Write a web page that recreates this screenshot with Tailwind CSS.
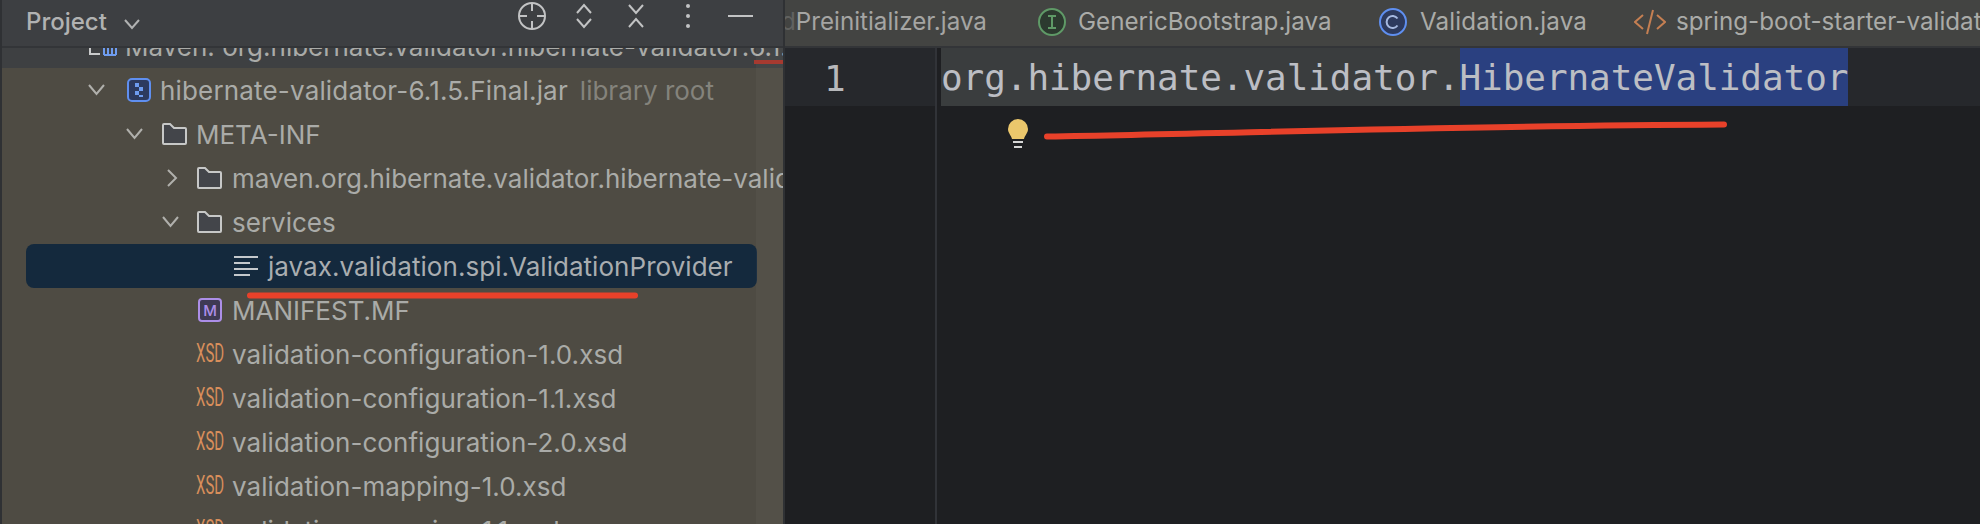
<!DOCTYPE html>
<html lang="en">
<head>
<meta charset="UTF-8">
<title>Project</title>
<script src="https://cdn.jsdelivr.net/npm/@tailwindcss/browser@4"></script>
</head>
<body class="overflow-hidden bg-[#1e1f22]">
<div class="relative flex h-[524px] w-[1980px] overflow-hidden font-['Inter',sans-serif] text-[26px] text-[#aaaba8]">

	<!-- project tool window -->
	<aside class="flex h-full w-[785px] shrink-0 flex-col border-x-2 border-[#2f3134] bg-[#4e4b43]">
		<header class="relative z-10 flex h-[48px] shrink-0 items-center border-b-2 border-[#333538] bg-[#3d3f42] pb-[2px] pl-[24px] text-[24px] text-[#b1b2b2]">
			<span class="font-medium">Project</span>
			<svg class="ml-[16px] mt-[3px]" width="18" height="12" viewBox="0 0 18 12" fill="none" stroke="#b1b2b2" stroke-width="2"><path d="M2 2l7 8 7-8"/></svg>
			<svg class="absolute left-[514px] top-[1px]" width="32" height="32" viewBox="0 0 32 32" fill="none" stroke="#c2c3c4" stroke-width="2"><circle cx="16" cy="15" r="13"/><path d="M16 2v8M16 20v8M3 15h8M21 15h8"/></svg>
			<svg class="absolute left-[572px] top-[3px]" width="20" height="26" viewBox="0 0 20 26" fill="none" stroke="#c2c3c4" stroke-width="2"><path d="M3 10l7-8 7 8M3 16l7 8 7-8"/></svg>
			<svg class="absolute left-[624px] top-[3px]" width="20" height="26" viewBox="0 0 20 26" fill="none" stroke="#c2c3c4" stroke-width="2"><path d="M3 2l7 8 7-8M3 24l7-8 7 8"/></svg>
			<svg class="absolute left-[682px] top-[3px]" width="8" height="26" viewBox="0 0 8 26" fill="#c2c3c4"><circle cx="4" cy="3" r="2"/><circle cx="4" cy="13" r="2"/><circle cx="4" cy="23" r="2"/></svg>
			<div class="absolute left-[726px] top-[15px] h-[2px] w-[25px] bg-[#c2c3c4]"></div>
		</header>

		<div class="relative flex-1 overflow-hidden">
			<div class="-mt-[24px] whitespace-nowrap">
				<div class="flex h-[44px] items-center bg-[#3e4042] pl-[86px]">
					<svg class="shrink-0" width="32" height="24" viewBox="0 0 32 24" fill="none"><path d="M2 2v18h10" stroke="#c9cacb" stroke-width="2"/><path d="M16 21V10h4v11M20 21V6h4v15M24 21V10h4v11M16 21h12" stroke="#6e9cf0" stroke-width="2"/></svg>
					<span class="ml-[5px]">Maven: org.hibernate.validator:hibernate-validator:6.1.5.Final</span>
				</div>

				<div class="flex h-[44px] items-center pl-[86px]">
					<svg class="w-[17px] shrink-0" height="12" viewBox="0 0 17 12" fill="none" stroke="#b0b0ac" stroke-width="2"><path d="M1 1l7.5 9L16 1"/></svg>
					<svg class="ml-[22px] shrink-0" width="24" height="24" viewBox="0 0 24 24"><rect x="1" y="1" width="22" height="22" rx="4" fill="#2d3a5e" stroke="#5f8ff0" stroke-width="2"/><path d="M8 5h4v4H8zM12 9h4v4h-4zM8 13h4v4H8zM12 17h4v2h-4z" fill="#6e9cf0"/></svg>
					<span class="ml-[9px] tracking-[0.17px]">hibernate-validator-6.1.5.Final.jar</span>
					<span class="ml-[12px] text-[#84837c]">library root</span>
				</div>

				<div class="flex h-[44px] items-center pl-[124px]">
					<svg class="w-[17px] shrink-0" height="12" viewBox="0 0 17 12" fill="none" stroke="#b0b0ac" stroke-width="2"><path d="M1 1l7.5 9L16 1"/></svg>
					<svg class="ml-[18px] shrink-0" width="27" height="24" viewBox="0 0 27 24"><path d="M2 21V3q0-1 1-1h6l4 4h11q1 0 1 1v14q0 1-1 1H3q-1 0-1-1z" fill="#43454a" stroke="#c7c8c7" stroke-width="2"/></svg>
					<span class="ml-[8px]">META-INF</span>
				</div>

				<div class="flex h-[44px] items-center pl-[162px]">
					<svg class="w-[17px] shrink-0" height="20" viewBox="0 0 17 20" fill="none" stroke="#b0b0ac" stroke-width="2"><path d="M4 2l8 8-8 8"/></svg>
					<svg class="ml-[15px] shrink-0" width="27" height="24" viewBox="0 0 27 24"><path d="M2 21V3q0-1 1-1h6l4 4h11q1 0 1 1v14q0 1-1 1H3q-1 0-1-1z" fill="#43454a" stroke="#c7c8c7" stroke-width="2"/></svg>
					<span class="ml-[9px]">maven.org.hibernate.validator.hibernate-validator-6.1.5.Final</span>
				</div>

				<div class="flex h-[44px] items-center pl-[160px]">
					<svg class="w-[17px] shrink-0" height="12" viewBox="0 0 17 12" fill="none" stroke="#b0b0ac" stroke-width="2"><path d="M1 1l7.5 9L16 1"/></svg>
					<svg class="ml-[17px] shrink-0" width="27" height="24" viewBox="0 0 27 24"><path d="M2 21V3q0-1 1-1h6l4 4h11q1 0 1 1v14q0 1-1 1H3q-1 0-1-1z" fill="#43454a" stroke="#c7c8c7" stroke-width="2"/></svg>
					<span class="ml-[9px]">services</span>
				</div>

				<div class="ml-[24px] flex h-[44px] w-[731px] items-center rounded-[8px] bg-[#14293d] pl-[208px]">
					<svg class="shrink-0" width="24" height="20" viewBox="0 0 24 20" fill="none" stroke="#c4c8cc" stroke-width="2"><path d="M0 1h24M0 7h16M0 13h24M0 19h16"/></svg>
					<span class="ml-[10px] tracking-[0.04px] text-[#a9adb0]">javax.validation.spi.ValidationProvider</span>
				</div>

				<div class="flex h-[44px] items-center pl-[196px]">
					<svg class="shrink-0" width="24" height="24" viewBox="0 0 24 24"><rect x="1" y="1" width="22" height="22" rx="3" fill="#3f3a54" stroke="#ac8ee8" stroke-width="2"/><text x="12" y="18" text-anchor="middle" font-family="Inter" font-size="15" font-weight="500" fill="#ac8ee8">M</text></svg>
					<span class="ml-[10px]">MANIFEST.MF</span>
				</div>

				<div class="flex h-[44px] items-center pl-[194px]">
					<span class="w-[28px] shrink-0 origin-left scale-x-[0.6] font-['Roboto',sans-serif] text-[25px] text-[#d88e5b]">XSD</span>
					<span class="ml-[8px] tracking-[0.05px]">validation-configuration-1.0.xsd</span>
				</div>
				<div class="flex h-[44px] items-center pl-[194px]">
					<span class="w-[28px] shrink-0 origin-left scale-x-[0.6] font-['Roboto',sans-serif] text-[25px] text-[#d88e5b]">XSD</span>
					<span class="ml-[8px] tracking-[0.05px]">validation-configuration-1.1.xsd</span>
				</div>
				<div class="flex h-[44px] items-center pl-[194px]">
					<span class="w-[28px] shrink-0 origin-left scale-x-[0.6] font-['Roboto',sans-serif] text-[25px] text-[#d88e5b]">XSD</span>
					<span class="ml-[8px] tracking-[0.05px]">validation-configuration-2.0.xsd</span>
				</div>
				<div class="flex h-[44px] items-center pl-[194px]">
					<span class="w-[28px] shrink-0 origin-left scale-x-[0.6] font-['Roboto',sans-serif] text-[25px] text-[#d88e5b]">XSD</span>
					<span class="ml-[8px] tracking-[0.05px]">validation-mapping-1.0.xsd</span>
				</div>
				<div class="flex h-[44px] items-center pl-[194px]">
					<span class="w-[28px] shrink-0 origin-left scale-x-[0.6] font-['Roboto',sans-serif] text-[25px] text-[#d88e5b]">XSD</span>
					<span class="ml-[8px] tracking-[0.05px]">validation-mapping-1.1.xsd</span>
				</div>
			</div>
			<!-- scrollbar track over the tree -->
			<div class="absolute inset-y-0 right-0 w-[27px] bg-white/3"></div>
		</div>
	</aside>

	<!-- editor -->
	<main class="flex min-w-0 flex-1 flex-col">
		<nav class="flex h-[48px] shrink-0 items-center overflow-hidden whitespace-nowrap border-b-2 border-[#333538] bg-[#434442] pb-[2px] text-[24.2px]">
			<span class="-ml-[4px] w-[257px] shrink-0 text-[#a5a5a3]"><span class="opacity-30">d</span>Preinitializer.java</span>
			<svg class="shrink-0" width="28" height="28" viewBox="0 0 28 28"><circle cx="14" cy="14" r="13" fill="#2c3a2f" stroke="#5f9a67" stroke-width="2"/><path d="M10 8h8M10 20h8M14 8v12" stroke="#5f9a67" stroke-width="2" fill="none"/></svg>
			<span class="ml-[12px] w-[301px] shrink-0">GenericBootstrap.java</span>
			<svg class="shrink-0" width="28" height="28" viewBox="0 0 28 28"><circle cx="14" cy="14" r="13" fill="#2d3a5e" stroke="#5f8ff0" stroke-width="2"/><path d="M18.500 10.500a6 6 0 1 0 0 7" stroke="#a6b9e0" stroke-width="2" fill="none"/></svg>
			<span class="ml-[13px] w-[214px] shrink-0 tracking-[0.15px]">Validation.java</span>
			<svg class="shrink-0" width="32" height="28" viewBox="0 0 32 28" fill="none" stroke="#c57f52" stroke-width="2"><path d="M9 7l-8 7 8 7M23 7l8 7-8 7M19 2l-6 24"/></svg>
			<span class="ml-[10px]">spring-boot-starter-validation</span>
		</nav>

		<div class="flex flex-1">
			<div class="h-full w-[152px] shrink-0 border-r-2 border-[#313338]">
				<div class="flex h-[58px] items-center bg-[#26282c] pl-[39px] pt-[3px] font-['DejaVu_Sans_Mono',monospace] text-[36px] text-[#b7b8bb]">1</div>
			</div>
			<div class="relative flex-1">
				<div class="ml-[4px] flex h-[58px] items-center bg-[#26282c] font-['DejaVu_Sans_Mono',monospace] text-[36px] tracking-[-0.07px] text-[#bcbec4]">
					<span class="bg-[#3a3d3e] pt-[2px] leading-[56px]">org.hibernate.validator.</span><span class="bg-[#2a4080] pt-[2px] leading-[56px]">HibernateValidator</span>
				</div>
				<svg class="absolute left-[71px] top-[71px]" width="20" height="30" viewBox="0 0 20 30"><path d="M10 0a10 10 0 0 1 10 10c0 4-3 6-4 10H4c-1-4-4-6-4-10A10 10 0 0 1 10 0z" fill="#ebc76c"/><path d="M5 23h10M6 28h8" stroke="#d6d6d6" stroke-width="2"/></svg>
			</div>
		</div>
	</main>

	<!-- red annotations -->
	<svg class="pointer-events-none absolute inset-0" width="1980" height="524" viewBox="0 0 1980 524" fill="none" stroke="#e8412a" stroke-width="6" stroke-linecap="round">
		<path d="M250 295.500H635"/>
		<path d="M1047 136.500C1250 133 1450 126 1724 124.500"/>
	</svg>
	<div class="absolute left-[754px] top-[60px] h-[4px] w-[29px] bg-[#a63a30]"></div>
</div>
</body>
</html>
